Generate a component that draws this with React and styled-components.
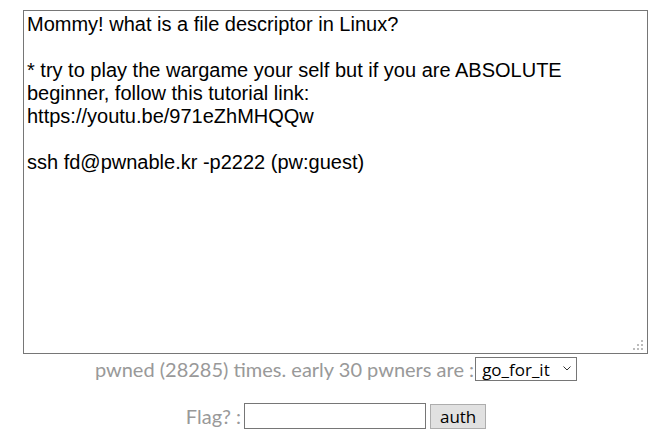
import React from 'react';
import styled, { createGlobalStyle } from 'styled-components';

const Global = createGlobalStyle`
  body {
    margin: 0;
    background: #fff;
    font-family: 'Lato', sans-serif;
  }
`;

const Page = styled.div`
  display: flex;
  flex-direction: column;
  align-items: center;
  padding-top: 10px;
`;

const Box = styled.div`
  position: relative;
  width: 625px;
  height: 344px;
  margin-left: -1px;
`;

const Desc = styled.textarea`
  display: block;
  width: 100%;
  height: 100%;
  box-sizing: border-box;
  margin: 0;
  padding: 2px 3px;
  border: 1px solid #767676;
  font-family: 'Liberation Sans', Arial, sans-serif;
  font-size: 20px;
  line-height: 23px;
  color: #000;
  resize: none;
  outline: none;
`;

const Grip = styled.svg`
  position: absolute;
  right: 5px;
  bottom: 4px;
  width: 10px;
  height: 10px;
`;

const Row = styled.div`
  display: flex;
  align-items: center;
  justify-content: center;
  gap: ${(p) => p.gap}px;
  color: #999;
  font-size: 20px;
  margin-top: ${(p) => p.top}px;
`;

const PickWrap = styled.div`
  position: relative;
  display: flex;
`;

const Picker = styled.select`
  appearance: none;
  width: 102px;
  height: 24px;
  font-family: 'Open Sans', sans-serif;
  font-size: 17px;
  color: #000;
  border: 1px solid #767676;
  border-radius: 0;
  background: #fff;
  padding: 0 0 0 6px;
  margin: 0;
  outline: none;
`;

const Chevron = styled.svg`
  position: absolute;
  right: 6px;
  top: 9px;
  width: 8px;
  height: 5px;
  pointer-events: none;
`;

const FlagInput = styled.input`
  width: 182px;
  height: 26px;
  box-sizing: border-box;
  border: 1px solid #767676;
  margin: 0 1px 0 0;
  outline: none;
`;

const Auth = styled.button`
  width: 56px;
  height: 25px;
  box-sizing: border-box;
  font-family: 'Open Sans', sans-serif;
  font-size: 17px;
  line-height: 1;
  color: #000;
  background: #e1e1e1;
  border: 1px solid #adadad;
  border-radius: 0;
  padding: 0;
`;

const text = `Mommy! what is a file descriptor in Linux?

* try to play the wargame your self but if you are ABSOLUTE beginner, follow this tutorial link:
https://youtu.be/971eZhMHQQw

ssh fd@pwnable.kr -p2222 (pw:guest)`;

export default function App() {
  return (
    <Page>
      <Global />
      <Box>
        <Desc readOnly value={text} />
        <Grip viewBox="0 0 10 10">
          <g fill="#bcbcbc">
            <rect x="8" y="0" width="2" height="2" />
            <rect x="4" y="4" width="2" height="2" />
            <rect x="8" y="4" width="2" height="2" />
            <rect x="0" y="8" width="2" height="2" />
            <rect x="4" y="8" width="2" height="2" />
            <rect x="8" y="8" width="2" height="2" />
          </g>
        </Grip>
      </Box>
      <Row top={3} gap={1}>
        <span>pwned (28285) times. early 30 pwners are :</span>
        <PickWrap>
          <Picker defaultValue="go_for_it">
            <option>go_for_it</option>
          </Picker>
          <Chevron viewBox="0 0 8 5">
            <path d="M0.5 0.5 L4 4 L7.5 0.5" fill="none" stroke="#333" strokeWidth="1" />
          </Chevron>
        </PickWrap>
      </Row>
      <Row top={22} gap={3}>
        <span>Flag? :</span>
        <FlagInput type="text" />
        <Auth>auth</Auth>
      </Row>
    </Page>
  );
}
